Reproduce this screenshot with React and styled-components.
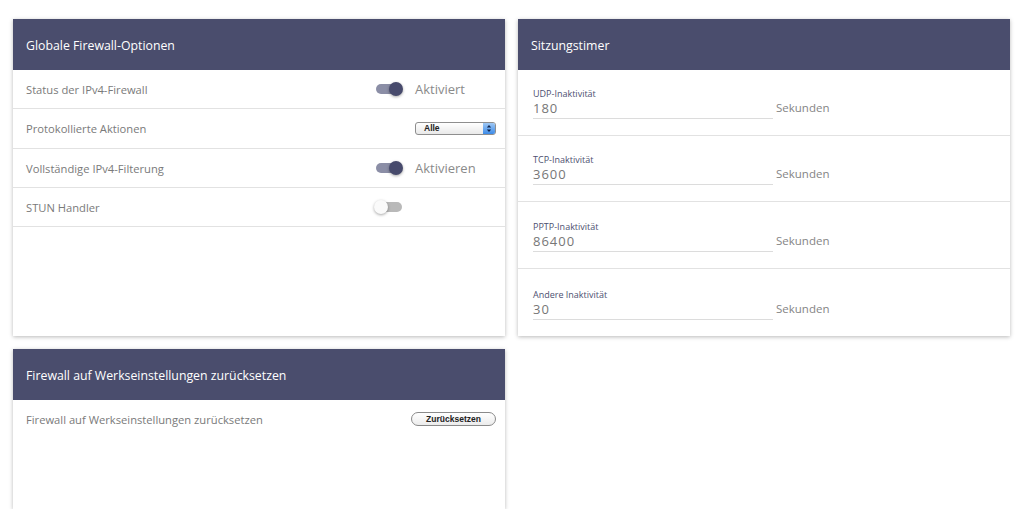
import React from 'react';
import styled, { createGlobalStyle } from 'styled-components';

const GlobalStyle = createGlobalStyle`
  html, body {
    margin: 0;
    padding: 0;
    background: #ffffff;
    font-family: "Open Sans", "Noto Sans", sans-serif;
  }
`;

const Page = styled.div`
  display: grid;
  grid-template-columns: 492px 492px;
  grid-template-rows: 317px 160px;
  column-gap: 13px;
  row-gap: 13px;
  padding: 19px 0 0 13px;
  align-items: start;
`;

const Card = styled.section`
  background: #fff;
  box-shadow: 0 1px 4px rgba(0, 0, 0, 0.28);
  height: ${p => p.$height}px;
  display: flex;
  flex-direction: column;
  overflow: hidden;
`;

const CardHeader = styled.header`
  height: 51px;
  flex: none;
  background: #4a4d6d;
  color: #fff;
  font-size: 12.3px;
  display: flex;
  align-items: center;
  padding-left: 13px;
  padding-top: 1px;
  box-sizing: border-box;
`;

const Row = styled.div`
  display: flex;
  align-items: center;
  height: ${p => p.$height || 39}px;
  box-sizing: border-box;
  border-bottom: ${p => (p.$noBorder ? 'none' : '1px solid #e2e2e2')};
  padding: 0 9px 0 13px;
`;

const RowLabel = styled.span`
  flex: 1;
  font-size: 11.2px;
  color: #7a7a7a;
`;

const Control = styled.div`
  width: 121px;
  display: flex;
  align-items: center;
  justify-content: ${p => (p.$end ? 'flex-end' : 'flex-start')};
  gap: 13px;
`;

const Track = styled.div`
  position: relative;
  width: 26px;
  height: 10px;
  border-radius: 5px;
  margin-left: 1px;
  background: ${p => (p.$on ? '#8b8ea6' : '#b9b9b9')};
`;

const Knob = styled.div`
  position: absolute;
  top: -2px;
  left: ${p => (p.$on ? '13px' : '-2px')};
  width: 14px;
  height: 14px;
  border-radius: 50%;
  background: ${p => (p.$on ? '#474a6c' : '#fafafa')};
  box-shadow: 0 1px 3px rgba(0, 0, 0, 0.35);
`;

const ToggleText = styled.span`
  font-size: 13px;
  color: #8a8a8a;
`;

const SelectBox = styled.div`
  width: 81px;
  height: 13px;
  box-sizing: border-box;
  border: 1px solid #8e8e8e;
  border-radius: 3px;
  background: linear-gradient(#ffffff, #e9e9e9);
  display: flex;
  align-items: stretch;
  overflow: hidden;
`;

const SelectValue = styled.span`
  flex: 1;
  font-size: 8.5px;
  font-weight: 700;
  color: #222;
  line-height: 11px;
  padding-left: 8px;
  font-family: "Liberation Sans", Arial, sans-serif;
`;

const SelectArrow = styled.span`
  width: 12px;
  background: linear-gradient(#9fc8f4, #3d8be8);
  display: flex;
  align-items: center;
  justify-content: center;
`;

const PillButton = styled.button`
  width: 85px;
  height: 14px;
  margin-right: 0;
  border: 1px solid #8a8a8a;
  border-radius: 7px;
  background: linear-gradient(#ffffff, #ececec);
  font-family: "Liberation Sans", Arial, sans-serif;
  font-size: 8.5px;
  font-weight: 700;
  color: #222;
  padding: 0;
  line-height: 12px;
`;

const TimerRow = styled.div`
  height: ${p => p.$height}px;
  box-sizing: border-box;
  border-bottom: ${p => (p.$noBorder ? 'none' : '1px solid #e2e2e2')};
  padding: 16px 0 0 15px;
  display: flex;
  align-items: flex-end;
`;

const Field = styled.div`
  width: 240px;
  border-bottom: 1px solid #dcdcdc;
  padding-bottom: 1px;
  margin-bottom: ${p => p.$mb}px;
`;

const FieldLabel = styled.div`
  font-size: 9px;
  color: #4d5070;
  line-height: 12px;
`;

const FieldValue = styled.div`
  font-size: 13px;
  color: #777;
  letter-spacing: 1px;
  line-height: 17px;
`;

const Unit = styled.span`
  font-size: 11.5px;
  color: #858585;
  margin-left: 3px;
  margin-bottom: ${p => p.$mb + 4}px;
`;

const Toggle = ({ on, text }) => (
  <Control>
    <Track $on={on}>
      <Knob $on={on} />
    </Track>
    {text && <ToggleText>{text}</ToggleText>}
  </Control>
);

const timers = [
  { label: 'UDP-Inaktivität', value: '180', h: 66 },
  { label: 'TCP-Inaktivität', value: '3600', h: 66 },
  { label: 'PPTP-Inaktivität', value: '86400', h: 67 },
  { label: 'Andere Inaktivität', value: '30', h: 67 },
];

export default function App() {
  return (
    <>
      <GlobalStyle />
      <Page>
        <Card $height={317}>
          <CardHeader>Globale Firewall-Optionen</CardHeader>
          <Row>
            <RowLabel>Status der IPv4-Firewall</RowLabel>
            <Toggle on text="Aktiviert" />
          </Row>
          <Row $height={40}>
            <RowLabel>Protokollierte Aktionen</RowLabel>
            <Control $end>
              <SelectBox>
                <SelectValue>Alle</SelectValue>
                <SelectArrow>
                  <svg width="6" height="9" viewBox="0 0 6 9">
                    <path d="M3 1 L5.2 3.6 H0.8 Z" fill="#10244a" />
                    <path d="M3 8 L5.2 5.4 H0.8 Z" fill="#10244a" />
                  </svg>
                </SelectArrow>
              </SelectBox>
            </Control>
          </Row>
          <Row>
            <RowLabel>Vollständige IPv4-Filterung</RowLabel>
            <Toggle on text="Aktivieren" />
          </Row>
          <Row>
            <RowLabel>STUN Handler</RowLabel>
            <Toggle on={false} />
          </Row>
        </Card>

        <Card $height={317}>
          <CardHeader>Sitzungstimer</CardHeader>
          {timers.map((t, i) => (
            <TimerRow key={t.label} $height={t.h} $noBorder={i === timers.length - 1}>
              <Field $mb={16}>
                <FieldLabel>{t.label}</FieldLabel>
                <FieldValue>{t.value}</FieldValue>
              </Field>
              <Unit $mb={16}>Sekunden</Unit>
            </TimerRow>
          ))}
        </Card>

        <Card $height={160}>
          <CardHeader>Firewall auf Werkseinstellungen zurücksetzen</CardHeader>
          <Row $height={38} $noBorder>
            <RowLabel>Firewall auf Werkseinstellungen zurücksetzen</RowLabel>
            <Control $end>
              <PillButton>Zurücksetzen</PillButton>
            </Control>
          </Row>
        </Card>
      </Page>
    </>
  );
}
